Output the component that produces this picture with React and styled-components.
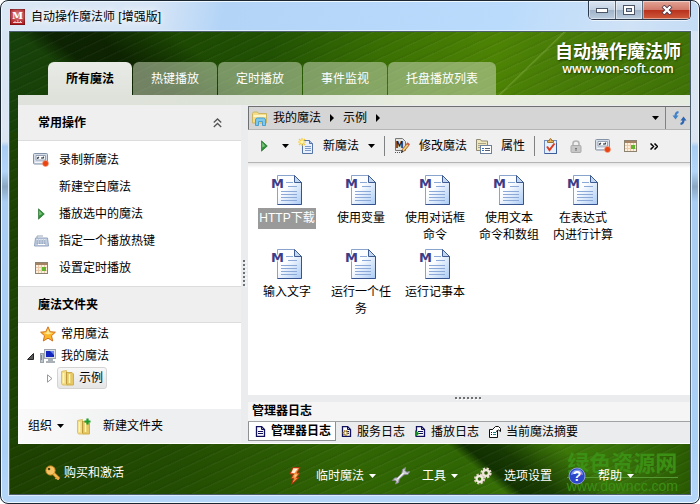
import React, { useState } from 'react';
import styled, { createGlobalStyle, css } from 'styled-components';

const GlobalStyle = createGlobalStyle`
  * {
    box-sizing: border-box;
  }
  body {
    margin: 0;
    background: #ffffff;
    color: #000000;
    font-family: 'Liberation Sans', 'Noto Sans CJK SC', sans-serif;
    font-size: 12px;
    line-height: 18px;
  }
  button {
    margin: 0;
    padding: 0;
    border: 0;
    background: none;
    color: inherit;
    font: inherit;
    white-space: nowrap;
    cursor: pointer;
  }
  svg {
    display: block;
    flex: none;
  }
  ul {
    list-style: none;
    margin: 0;
    padding: 0;
  }
`;

/* ---------- window frame ---------- */

const Window = styled.div`
  display: flex;
  flex-direction: column;
  min-height: 100vh;
  padding: 0 8px 8px;
  border: 1px solid #1b2633;
  border-radius: 8px;
  box-shadow: inset 0 0 0 1px #eef6fe;
  background:
    linear-gradient(100deg, #dbe7f4 0, #d6e5f6 22%, #b3d4f7 32%, #badbfc 72%, #cfe2f6 90%, #c4dcf5 100%)
      0 0 / 100% 30px no-repeat,
    linear-gradient(#d5e3f3 0, #dce6f2 26%, #dbe5f1 28%, #a9cdf2 29%, #b2d5f8 34%, #8aa6c2 37%, #a9cdf3 40%, #abd0f6 90%, #b5d6f8 100%);
`;

const TitleBar = styled.header`
  display: flex;
  align-items: flex-start;
  height: 30px;
`;

const Title = styled.h1`
  display: flex;
  align-items: center;
  gap: 6px;
  height: 31px;
  margin: 0;
  padding-left: 1px;
  font-size: 12px;
  font-weight: 400;
  text-shadow: 0 0 6px #ffffff, 0 0 10px #ffffff;
`;

const Captions = styled.div`
  display: flex;
  margin-left: auto;
  border: 1px solid #2c3a4c;
  border-top: 0;
  border-radius: 0 0 5px 5px;
  overflow: hidden;
  box-shadow: 0 1px 0 #eaf3fc;
`;

const Caption = styled.button`
  display: flex;
  align-items: center;
  justify-content: center;
  width: ${(props) => (props.$close ? '47px' : '27px')};
  height: 18px;
  border-right: ${(props) => (props.$close ? '0' : '1px solid #5b6b7e')};
  box-shadow: inset 0 0 0 1px rgba(255, 255, 255, 0.45);
  background: ${(props) =>
    props.$close
      ? 'linear-gradient(#e3a597 0, #d1796a 48%, #b8301b 50%, #cf5a3b 100%)'
      : 'linear-gradient(#dbe6f2 0, #c3d1e1 48%, #9fb2c8 50%, #bccddf 100%)'};
`;

const Body = styled.div`
  display: flex;
  flex: 1;
  flex-direction: column;
  border: 1px solid #4b5f70;
  box-shadow: 0 0 0 1px #dcecfc;
  background:
    repeating-linear-gradient(155deg, rgba(255, 255, 255, 0.03) 0 1px, transparent 2px 6px, rgba(0, 0, 0, 0.05) 8px 9px),
    linear-gradient(136deg, transparent 384px, rgba(190, 220, 130, 0.25) 385px, transparent 387px) 0 0 / 100% 64px no-repeat,
    linear-gradient(220deg, transparent 0 85px, rgba(9, 34, 0, 0.7) 125px, rgba(9, 34, 0, 0.8) 146px, transparent 156px)
      0 100% / 100% 50px no-repeat,
    linear-gradient(90deg, #1d4001 0, #234d02 25%, #316504 50%, #306604 66%, #3f7a08 78%, #37720a 90%, #2a5a02 100%)
      0 100% / 100% 50px no-repeat,
    linear-gradient(38deg, transparent 0 54px, rgba(8, 22, 0, 0.7) 72px, rgba(8, 22, 0, 0.7) 100px, transparent 150px)
      0 0 / 300px 64px no-repeat,
    linear-gradient(100deg, #16400a 0, #1b4602 20%, #215203 38%, #3a7003 54%, #4d8304 70%, #487c08 80%, #3f7207 100%)
      0 0 / 100% 100px no-repeat,
    #1c4204;
`;

const Banner = styled.div`
  display: flex;
  justify-content: space-between;
  height: 63px;
  padding-left: 38px;
`;

const Tabs = styled.div`
  display: flex;
  align-items: flex-end;
  gap: 1px;
`;

const Tab = styled.button`
  height: 33px;
  padding: 0 18px;
  border-radius: 6px 6px 0 0;
  background: rgba(205, 219, 190, 0.52);
  color: #ffffff;
  ${(props) =>
    props.$active &&
    css`
      background: linear-gradient(#e9ebe6, #dfe3dc);
      color: #000000;
      font-weight: 700;
    `}
`;

const Brand = styled.div`
  padding: 8px 9px 0 0;
  color: #ffffff;
  text-align: center;
  text-shadow: 1px 1px 2px #1d3a00;
  font-size: 18px;
  font-weight: 700;
  line-height: 24px;
`;

const BrandSite = styled.div`
  font-family: 'Open Sans', sans-serif;
  font-size: 12px;
  font-weight: 600;
  line-height: 10px;
`;

const Panel = styled.main`
  display: flex;
  flex: 1;
  flex-direction: column;
  margin-left: 8px;
  border-bottom: 1px solid #ffffff;
  background: #eaecee;
`;

const Strip = styled.div`
  height: 10px;
  background: linear-gradient(90deg, #dfe2dc 0, #dde2d8 30%, #e8ede0 60%, #e6ecdf 100%);
`;

const Columns = styled.div`
  display: flex;
  flex: 1;
`;

/* ---------- sidebar ---------- */

const Sidebar = styled.aside`
  display: flex;
  flex-direction: column;
  width: 223px;
  background: #ffffff;
`;

const SectionTitle = styled.h2`
  display: flex;
  align-items: center;
  justify-content: space-between;
  height: 36px;
  margin: 0;
  padding: 0 19px 0 20px;
  border-bottom: 1px solid #dadcde;
  background: #efefef;
  font-size: 12px;
  font-weight: 700;
`;

const ActionList = styled.ul`
  padding: 5px 0;
  border-bottom: 1px solid #dadcde;
`;

const Action = styled.button`
  display: flex;
  align-items: center;
  gap: 10px;
  width: 100%;
  height: 27px;
  padding-left: 15px;
`;

const IconSlot = styled.span`
  display: flex;
  justify-content: center;
  width: 16px;
`;

const Tree = styled.ul`
  flex: 1;
`;

const TreeRow = styled.li`
  display: flex;
  align-items: center;
  gap: ${(props) => (props.$level ? '4px' : '6px')};
  height: 22px;
  padding-left: ${(props) => (props.$level ? '28px' : '8px')};
`;

const Expander = styled.span`
  display: flex;
  justify-content: center;
  width: ${(props) => (props.$narrow ? '7px' : '8px')};
`;

const TreeItem = styled.button`
  display: flex;
  align-items: center;
  gap: 5px;
  height: 22px;
  ${(props) =>
    props.$selected &&
    css`
      padding: 0 3px;
      border: 1px solid #d4d4d4;
      border-radius: 3px;
      background: linear-gradient(#f8f8f8, #e5e5e5);
    `}
`;

const SideBar = styled.div`
  display: flex;
  align-items: center;
  gap: 13px;
  height: 34px;
  padding-left: 10px;
  background: linear-gradient(90deg, #fafafa 0, #eeeff0 60%);
`;

const TextButton = styled.button`
  display: flex;
  align-items: center;
  gap: ${(props) => props.$gap || '5px'};
`;

const Splitter = styled.div`
  display: flex;
  align-items: flex-end;
  width: 7px;
  padding: 0 0 155px 2px;
`;

/* ---------- main area ---------- */

const Content = styled.section`
  display: flex;
  flex: 1;
  flex-direction: column;
  min-width: 0;
`;

const AddressBar = styled.nav`
  display: flex;
  align-items: center;
  height: 24px;
  margin-top: 1px;
  padding-left: 3px;
  border: 1px solid #6d6f70;
  border-right: 0;
  border-bottom-color: #b5b5b5;
  background: #d5d5d5;
`;

const Crumb = styled.button`
  display: flex;
  align-items: center;
  gap: 9px;
  padding: 0 4px 0 5px;
`;

const AddressTools = styled.div`
  display: flex;
  align-items: center;
  align-self: stretch;
  gap: 6px;
  margin-left: auto;
  padding-right: 3px;
`;

const Divider = styled.span`
  width: 1px;
  height: ${(props) => props.$height || '20px'};
  background: #7f8183;
`;

const Toolbar = styled.div`
  display: flex;
  align-items: center;
  gap: 9px;
  height: 33px;
  padding-left: 13px;
  border-bottom: 1px solid #b3b5b7;
  background: #f0f0f0;
`;

const CommandIcons = styled.div`
  display: flex;
  align-items: center;
  gap: 13px;
`;

const FileArea = styled.ul`
  display: grid;
  flex: 1;
  grid-template-columns: repeat(auto-fill, 74px);
  grid-auto-rows: 74px;
  padding: 11px 0 0 2px;
  background: linear-gradient(#e4e4e4, #ffffff 5px);
`;

const File = styled.button`
  display: flex;
  flex-direction: column;
  align-items: center;
  gap: 2px;
  width: 74px;
`;

const FileName = styled.span`
  max-width: 64px;
  padding: 2px 1px;
  line-height: 17px;
  white-space: pre-line;
  ${(props) =>
    props.$selected &&
    css`
      background: #9a9a9a;
      color: #ffffff;
    `}
`;

const LogSplitter = styled.div`
  display: flex;
  align-items: center;
  justify-content: center;
  height: 7px;
`;

const LogTitle = styled.h2`
  height: 20px;
  margin: 0;
  padding-left: 4px;
  border-bottom: 1px solid #9fa3a3;
  background: #f5f5f5;
  font-size: 12px;
  font-weight: 700;
  line-height: 19px;
`;

const LogTabs = styled.div`
  display: flex;
  height: 21px;
  padding-bottom: 2px;
`;

const LogTab = styled.button`
  display: flex;
  align-items: center;
  gap: 5px;
  padding: 0 5px;
  ${(props) =>
    props.$active &&
    css`
      padding: 0 4px 0 6px;
      border: 1px solid #8d9196;
      border-top: 0;
      background: #ffffff;
      font-weight: 700;
    `}
`;

/* ---------- footer ---------- */

const Footer = styled.footer`
  position: relative;
  z-index: 0;
  display: flex;
  align-items: center;
  height: 50px;
  padding: 14px 56px 0 35px;
  color: #ffffff;
`;

const FooterMenu = styled.nav`
  display: flex;
  gap: 16px;
  margin-left: auto;
`;

const FooterButton = styled.button`
  display: flex;
  align-items: center;
  gap: 5px;
`;

const FooterIcon = styled.span`
  display: flex;
  justify-content: center;
  width: 18px;
  margin-right: 7px;
`;

const Buy = styled(FooterButton)`
  gap: 3px;
  padding-bottom: 6px;
`;

const Watermark = styled.div`
  position: absolute;
  z-index: -1;
  right: 12px;
  bottom: 0;
  color: #3b8f14;
  font-size: 22px;
  font-weight: 700;
  line-height: 26px;
  text-align: center;
  pointer-events: none;
`;

const WatermarkSite = styled.div`
  border-top: 1px solid #559a33;
  font-size: 14px;
  font-weight: 400;
  line-height: 16px;
`;

/* ---------- icons ---------- */

const AppIcon = () => (
  <svg width="15" height="16" viewBox="0 0 15 16">
    <rect x="0.500" y="0.500" width="14" height="15" fill="#b11116" stroke="#7d0a0d" />
    <text x="7.500" y="9.500" textAnchor="middle" fill="#fff" fontFamily="DejaVu Serif" fontWeight="700" fontSize="10">
      M
    </text>
    <path d="M3 13.500h9" stroke="#f3c8c8" />
    <path d="M4.500 12.500h1M7 12h1.500M10 12.500h1" stroke="#f3c8c8" />
  </svg>
);

const Caret = ({ color = '#000' }) => (
  <svg width="7" height="4" viewBox="0 0 7 4">
    <path d="M0 0h7L3.500 4z" fill={color} />
  </svg>
);

const CrumbArrow = () => (
  <svg width="4" height="8" viewBox="0 0 4 8">
    <path d="M0 0l4 4-4 4z" fill="#000" />
  </svg>
);

const PlayIcon = () => (
  <svg width="7" height="12" viewBox="0 0 7 12">
    <path d="M0.500 0.800L6.300 6 0.500 11.200z" fill="#2f9138" stroke="#1b6122" strokeWidth="0.600" />
    <path d="M1.200 2.500v5l3-1.500z" fill="#7cc47e" />
  </svg>
);

const CassetteIcon = () => (
  <svg width="16" height="14" viewBox="0 0 16 14">
    <rect x="0.500" y="0.500" width="14" height="10.500" rx="1" fill="#d5dde8" stroke="#8492a8" />
    <path d="M3 2.500h9.500v4.500h-9.500z" fill="#fff" stroke="#97a3b3" />
    <path d="M4 5.500l2-1.500M5 4v2M9 4v2M10.500 3.500v2" stroke="#39434f" strokeWidth="1.200" />
    <path d="M2 9.500h8" stroke="#f5f8fb" />
    <circle cx="12.500" cy="10.500" r="3" fill="#ea4413" stroke="#f7a283" strokeWidth="0.600" />
  </svg>
);

const KeyboardIcon = () => (
  <svg width="15" height="12" viewBox="0 0 15 12">
    <path d="M3 3V1h6" fill="none" stroke="#9aa6b5" />
    <path d="M1.500 3h12l1 8H0.500z" fill="#c1cee2" stroke="#93a4bd" />
    <path d="M2.500 5h10M2.500 7h10" stroke="#fff" strokeDasharray="1.500 1" />
    <path d="M2.500 6h10M2.500 8h10" stroke="#7386a3" strokeDasharray="1.500 1" />
    <path d="M4 9.500h7" stroke="#fff" />
  </svg>
);

const CalendarIcon = () => (
  <svg width="13" height="12" viewBox="0 0 13 12">
    <rect x="0.500" y="0.500" width="12" height="11" fill="#fcefdc" stroke="#8b8270" />
    <rect x="1" y="1" width="11" height="2" fill="#a58261" />
    <path d="M1 5.500h11M1 8.500h11M3.500 3v8M6.500 3v8M9.500 3v8" stroke="#ecc9ab" />
    <rect x="7" y="5" width="4" height="4" fill="#62b32e" />
  </svg>
);

const StarIcon = () => (
  <svg width="16" height="16" viewBox="0 0 16 16">
    <path
      d="M8 0.800l2.200 4.900 5.200 0.500-3.900 3.500 1.200 5.300L8 12.200 3.300 15l1.200-5.300L0.600 6.200l5.200-0.500z"
      fill="#fbb62a"
      stroke="#d4711d"
    />
    <path d="M8 3l1.500 3.500 3.500 0.500-5 1.500-4.500-1.500 3-0.500z" fill="#ffe991" />
  </svg>
);

const ComputerIcon = () => (
  <svg width="16" height="15" viewBox="0 0 16 15">
    <rect x="0.500" y="4.500" width="3" height="9" fill="#bdc4ca" stroke="#9aa2a9" />
    <rect x="1" y="6" width="1" height="5" fill="#4eb04e" />
    <rect x="4.500" y="0.500" width="11" height="9" fill="#dbe0e6" stroke="#a2a8b0" />
    <rect x="6" y="2" width="8" height="6" fill="#1226bd" />
    <path d="M10 2h4v4z" fill="#6d86ee" />
    <path d="M8 10h5v2h2v2H6v-2h2z" fill="#a9b0b8" />
  </svg>
);

const FolderShape = () => (
  <>
    <path d="M0.500 1.500L5.500 0.500v13l1 1.500H1.500l-1-1.500z" fill="#f3dc85" stroke="#dcc06a" />
    <path d="M5.500 2.500h5.500l1.500 1.500v11H6l-0.500-1.500z" fill="#e6c862" stroke="#cfae4f" />
    <path d="M2.500 3v10M8.500 4v9" stroke="#fff5c4" strokeWidth="1.500" />
    <path d="M5.500 2v12" stroke="#bd9a3d" />
  </>
);

const FolderIcon = () => (
  <svg width="13" height="16" viewBox="0 0 13 16">
    <FolderShape />
  </svg>
);

const NewFolderIcon = () => (
  <svg width="14" height="17" viewBox="0 0 14 17">
    <g transform="translate(0 1)">
      <FolderShape />
    </g>
    <path d="M10.500 0.500v6M7.500 3.500h6" stroke="#1d9b2c" strokeWidth="2.200" />
  </svg>
);

const ExplorerIcon = () => (
  <svg width="16" height="15" viewBox="0 0 16 15">
    <path d="M0.500 12V2.500l1-1.500h4l1 1.500h8V12z" fill="#f4dd86" stroke="#cdb461" />
    <path d="M1.500 5h12.500" stroke="#fdf5c5" strokeWidth="2" />
    <path d="M3.500 14.500V9q0-2 2-2h6q2 0 2 2v5.500h-3V10.500h-4v4z" fill="#7cc8ee" stroke="#4a9fcc" />
  </svg>
);

const RefreshIcon = () => (
  <svg width="15" height="14" viewBox="0 0 15 14">
    <path d="M6.500 1Q3.500 1.500 3.500 5" fill="none" stroke="#3f83cc" strokeWidth="2" />
    <path d="M0.500 4.500h6L3.500 8.500z" fill="#3f83cc" />
    <path d="M8.500 13Q11.500 12.500 11.500 9" fill="none" stroke="#2c65b0" strokeWidth="2" />
    <path d="M8.500 9.500h6L11.500 5.500z" fill="#2c65b0" />
  </svg>
);

const NewMagicIcon = () => (
  <svg width="16" height="16" viewBox="0 0 16 16">
    <path d="M4.500 2.500h7l3 3v10h-10z" fill="#e8f0fb" stroke="#5573a4" />
    <path d="M11.500 2.500v3h3" fill="#a9c2e3" stroke="#5573a4" />
    <path d="M7 8.500h6M7 10.500h6M7 12.500h6" stroke="#7e9ac6" />
    <path d="M4 0v8M0 4h8M1 1l6 6M7 1L1 7" stroke="#f3cb3a" strokeWidth="1.200" />
    <circle cx="4" cy="4" r="1.800" fill="#fff6b0" />
  </svg>
);

const EditIcon = () => (
  <svg width="16" height="16" viewBox="0 0 16 16">
    <path d="M1.500 0.500h7l3 3v9h-10z" fill="#e3e3e1" stroke="#777" />
    <text x="1.500" y="9.500" fill="#222" fontFamily="DejaVu Sans" fontWeight="700" fontSize="8">
      M
    </text>
    <path d="M1 14.500h7" stroke="#555" strokeDasharray="1 1" />
    <path d="M14 6.500L9 12.500" stroke="#a96321" strokeWidth="3.400" />
    <path d="M14 6.500L9 12.500" stroke="#f3d183" strokeWidth="1.800" />
    <path d="M14.800 5.300l-1.200 1.500" stroke="#cf5a4a" strokeWidth="3.200" />
    <path d="M7 15l0.500-3 2.500 1.800z" fill="#333" />
  </svg>
);

const PropertiesIcon = () => (
  <svg width="16" height="15" viewBox="0 0 16 15">
    <path d="M0.500 11.500v-11h4l1 1.500h6v9.500z" fill="#efe6bd" stroke="#8f8b73" />
    <path d="M2 4.500h8M2 6.500h2M2 8.500h2" stroke="#a9a486" />
    <rect x="4.500" y="6.500" width="11" height="8" fill="#fff" stroke="#6c7f9b" />
    <path d="M6 9.500h2M6 11.500h2" stroke="#3a6fc4" />
    <path d="M9 9.500h5M9 11.500h5" stroke="#555f70" />
  </svg>
);

const ClipboardIcon = () => (
  <svg width="13" height="16" viewBox="0 0 13 16">
    <rect x="0.500" y="2.500" width="12" height="13" fill="#e6effc" stroke="#6f8bc0" />
    <path d="M1 15.500h11.500V5" fill="none" stroke="#3d5c9c" />
    <path d="M3.500 4.500v-2h2q0-2 1-2t1 2h2v2z" fill="#e7b25b" stroke="#9b7434" />
    <path d="M3 8.500l2.500 3.500L10.500 5.500" fill="none" stroke="#db3c22" strokeWidth="2" />
  </svg>
);

const LockIcon = () => (
  <svg width="12" height="13" viewBox="0 0 12 13">
    <path d="M3 6V3.500Q3 1 6 1t3 2.500V6" fill="none" stroke="#b5b5b5" strokeWidth="1.600" />
    <rect x="1" y="5.500" width="10" height="7" rx="1" fill="#c6c6c6" stroke="#aaa" />
    <path d="M6 8v3M5 8.500h2" stroke="#777" />
  </svg>
);

const MoreIcon = () => (
  <svg width="8" height="7" viewBox="0 0 8 7">
    <path d="M0.500 0.500l3 3-3 3M4.500 0.500l3 3-3 3" fill="none" stroke="#000" strokeWidth="1.500" />
  </svg>
);

const CollapseIcon = () => (
  <svg width="9" height="10" viewBox="0 0 9 10">
    <path d="M0.800 4.500l3.700-3.500 3.700 3.500M0.800 9l3.700-3.500L8.200 9" fill="none" stroke="#555" strokeWidth="1.300" />
  </svg>
);

const MagicFileIcon = () => (
  <svg width="32" height="32" viewBox="0 0 32 32">
    <defs>
      <linearGradient id="sheet" x1="0" y1="0" x2="1" y2="1">
        <stop offset="0.400" stopColor="#fbfdff" />
        <stop offset="1" stopColor="#a9caf5" />
      </linearGradient>
    </defs>
    <path d="M6.500 1.500h17l7 7v22h-24z" fill="url(#sheet)" stroke="#8aa3cc" />
    <path d="M30.500 8v22.500h-24" fill="none" stroke="#35548f" />
    <path d="M23.500 1.500v7h7z" fill="#c3d6f0" stroke="#3f5d92" />
    <path d="M15 8.500h7M17 12.500h9M10 17.500h16M10 20.500h16M10 23.500h16M10 26.500h16" stroke="#8ba8d6" />
    <text
      x="0"
      y="14"
      fill="#3d3d86"
      stroke="#ffffff"
      strokeWidth="2"
      paintOrder="stroke"
      fontFamily="DejaVu Sans"
      fontWeight="700"
      fontSize="13"
    >
      M
    </text>
  </svg>
);

const LogIcon = ({ kind }) => (
  <svg width="11" height="11" viewBox="0 0 11 11">
    <path d="M1.500 0.500h5l3 3v7h-8z" fill="#fff" stroke="#10105c" strokeWidth="1.300" />
    <path d="M6.500 0.500v3h3" fill="none" stroke="#10105c" />
    <path d="M3 5.500h5M3 7.500h5" stroke="#10105c" />
    {kind === 'service' && (
      <circle cx="4.500" cy="7" r="2" fill="#fff" stroke="#9a7417" strokeWidth="2" strokeDasharray="1.200 0.600" />
    )}
    {kind === 'play' && <path d="M0 4l4.500 3.500L0 11z" fill="#138a26" />}
  </svg>
);

const SummaryIcon = () => (
  <svg width="12" height="12" viewBox="0 0 12 12">
    <path d="M0.500 3.500h8v8h-8z" fill="#fff" stroke="#111" />
    <path d="M2 6.500h1M2 8.500h1" stroke="#111" />
    <path d="M4 6.500h3M4 8.500h3" stroke="#168080" />
    <path d="M3.500 3.500l3-3h3l2 2v3l-2-1.500L7 5.500" fill="#fff" stroke="#111" />
  </svg>
);

const KeyIcon = () => (
  <svg width="16" height="16" viewBox="0 0 16 16">
    <path d="M7 7l7 7" stroke="#c27a1b" strokeWidth="3.600" />
    <path d="M7 7l7 7" stroke="#f5bf55" strokeWidth="2" />
    <path d="M12.500 12l-2 2M14 14h-2" stroke="#e8a63c" strokeWidth="1.600" />
    <circle cx="5.500" cy="5.500" r="4.600" fill="#f6c364" stroke="#d38b25" />
    <circle cx="4" cy="4" r="1.300" fill="#4d4a10" />
  </svg>
);

const BoltIcon = () => (
  <svg width="12" height="18" viewBox="0 0 12 18">
    <path d="M4 0.500h7L8 6h3L7.500 10.500H10L2.500 17.500l2-6H2L4.500 7H0.800z" fill="#f58a3a" stroke="#ab3412" />
    <path d="M4.500 1.500h4.500L5.500 6H2.500z" fill="#fff3dc" />
    <path d="M5.500 7.500h3L5.500 11z" fill="#ffd58b" />
  </svg>
);

const WrenchIcon = () => (
  <svg width="18" height="18" viewBox="0 0 18 18">
    <path
      d="M13.500 0.500l-3 2-0.700 4-4.300 4.300-3 0.200-2 2.500 2.500-0.300 1.300 1.300-0.700 2.500 3-1.500 0.700-3.500 4.700-4.300 4-0.200 1.700-3-3 0.700-1.700-1.700z"
      fill="#cfd0d6"
      stroke="#85868f"
    />
    <path d="M5.500 12l6-6" stroke="#f6f6fa" strokeWidth="1.300" />
  </svg>
);

const GearsIcon = () => (
  <svg width="18" height="18" viewBox="0 0 18 18">
    <circle cx="12" cy="6" r="4.400" fill="none" stroke="#e9ded0" strokeWidth="2.400" strokeDasharray="2.200 1.250" />
    <circle cx="12" cy="6" r="2.900" fill="none" stroke="#efe6da" strokeWidth="2.200" />
    <circle cx="5.500" cy="12" r="4.400" fill="none" stroke="#d9cbba" strokeWidth="2.400" strokeDasharray="2.200 1.250" />
    <circle cx="5.500" cy="12" r="2.900" fill="none" stroke="#f3ece2" strokeWidth="2.200" />
  </svg>
);

const HelpIcon = () => (
  <svg width="18" height="18" viewBox="0 0 18 18">
    <circle cx="9" cy="9" r="8" fill="#2b47c9" stroke="#8d9bd6" />
    <path d="M3 8Q3.500 3 9 2.500T15 8Q9 5.500 3 8z" fill="#7f97ec" />
    <text x="9" y="14" textAnchor="middle" fill="#fff" fontFamily="Liberation Sans" fontWeight="700" fontSize="14">
      ?
    </text>
  </svg>
);

const GripVertical = () => (
  <svg width="4" height="28" viewBox="0 0 4 28">
    <path d="M1 0v28" stroke="#6f7274" strokeWidth="2" strokeDasharray="2 2" />
    <path d="M3 1v27" stroke="#fff" strokeDasharray="2 2" />
  </svg>
);

const GripHorizontal = () => (
  <svg width="28" height="3" viewBox="0 0 28 3">
    <path d="M0 1h28" stroke="#6f7274" strokeWidth="2" strokeDasharray="2 2" />
    <path d="M1 2.500h27" stroke="#fff" strokeDasharray="2 2" />
  </svg>
);

/* ---------- data ---------- */

const tabs = ['所有魔法', '热键播放', '定时播放', '事件监视', '托盘播放列表'];

const actions = [
  { name: '录制新魔法', icon: <CassetteIcon /> },
  { name: '新建空白魔法', icon: null },
  { name: '播放选中的魔法', icon: <PlayIcon /> },
  { name: '指定一个播放热键', icon: <KeyboardIcon /> },
  { name: '设置定时播放', icon: <CalendarIcon /> },
];

const files = [
  'HTTP下载',
  '使用变量',
  '使用对话框命令',
  '使用文本\n命令和数组',
  '在表达式\n内进行计算',
  '输入文字',
  '运行一个任务',
  '运行记事本',
];

const logs = [
  { name: '管理器日志', icon: <LogIcon /> },
  { name: '服务日志', icon: <LogIcon kind="service" /> },
  { name: '播放日志', icon: <LogIcon kind="play" /> },
  { name: '当前魔法摘要', icon: <SummaryIcon /> },
];

const menus = [
  { name: '临时魔法', icon: <BoltIcon />, caret: true },
  { name: '工具', icon: <WrenchIcon />, caret: true },
  { name: '选项设置', icon: <GearsIcon />, caret: false },
  { name: '帮助', icon: <HelpIcon />, caret: true },
];

function App() {
  const [tab, setTab] = useState(0);
  const [file, setFile] = useState(0);
  const [log, setLog] = useState(0);

  return (
    <>
      <GlobalStyle />
      <Window>
        <TitleBar>
          <Title>
            <AppIcon />
            自动操作魔法师 [增强版]
          </Title>
          <Captions>
            <Caption aria-label="最小化">
              <svg width="12" height="5" viewBox="0 0 12 5">
                <rect x="0.500" y="0.500" width="11" height="4" fill="#fff" stroke="#4c5566" />
              </svg>
            </Caption>
            <Caption aria-label="最大化">
              <svg width="12" height="10" viewBox="0 0 12 10">
                <rect x="0.500" y="0.500" width="11" height="9" fill="#fff" stroke="#4c5566" />
                <rect x="3.500" y="3.500" width="5" height="3" fill="#b4c4d6" stroke="#4c5566" />
              </svg>
            </Caption>
            <Caption $close aria-label="关闭">
              <svg width="12" height="10" viewBox="0 0 12 10">
                <path d="M2 1l8 8M10 1L2 9" stroke="#50394a" strokeWidth="4" />
                <path d="M2.500 1.500l7 7M9.500 1.500l-7 7" stroke="#fff" strokeWidth="2.400" />
              </svg>
            </Caption>
          </Captions>
        </TitleBar>

        <Body>
          <Banner>
            <Tabs role="tablist">
              {tabs.map((name, i) => (
                <Tab key={name} role="tab" aria-selected={tab === i} $active={tab === i} onClick={() => setTab(i)}>
                  {name}
                </Tab>
              ))}
            </Tabs>
            <Brand>
              自动操作魔法师
              <BrandSite>www.won-soft.com</BrandSite>
            </Brand>
          </Banner>

          <Panel>
            <Strip />
            <Columns>
              <Sidebar>
                <SectionTitle>
                  常用操作
                  <button aria-label="折叠">
                    <CollapseIcon />
                  </button>
                </SectionTitle>
                <ActionList>
                  {actions.map((action) => (
                    <li key={action.name}>
                      <Action>
                        <IconSlot>{action.icon}</IconSlot>
                        {action.name}
                      </Action>
                    </li>
                  ))}
                </ActionList>
                <SectionTitle>魔法文件夹</SectionTitle>
                <Tree>
                  <TreeRow>
                    <Expander />
                    <TreeItem>
                      <StarIcon />
                      常用魔法
                    </TreeItem>
                  </TreeRow>
                  <TreeRow>
                    <Expander>
                      <svg width="7" height="7" viewBox="0 0 7 7">
                        <path d="M6.500 0.500v6h-6z" fill="#595959" stroke="#262626" />
                      </svg>
                    </Expander>
                    <TreeItem>
                      <ComputerIcon />
                      我的魔法
                    </TreeItem>
                  </TreeRow>
                  <TreeRow $level>
                    <Expander $narrow>
                      <svg width="6" height="9" viewBox="0 0 6 9">
                        <path d="M0.500 0.800l4.500 3.700-4.500 3.700z" fill="#fff" stroke="#999" />
                      </svg>
                    </Expander>
                    <TreeItem $selected>
                      <FolderIcon />
                      示例
                    </TreeItem>
                  </TreeRow>
                </Tree>
                <SideBar>
                  <TextButton>
                    组织
                    <Caret />
                  </TextButton>
                  <TextButton $gap="12px">
                    <NewFolderIcon />
                    新建文件夹
                  </TextButton>
                </SideBar>
              </Sidebar>

              <Splitter>
                <GripVertical />
              </Splitter>

              <Content>
                <AddressBar>
                  <ExplorerIcon />
                  <Crumb>
                    我的魔法
                    <CrumbArrow />
                  </Crumb>
                  <Crumb>
                    示例
                    <CrumbArrow />
                  </Crumb>
                  <AddressTools>
                    <button aria-label="历史">
                      <Caret />
                    </button>
                    <Divider $height="22px" />
                    <button aria-label="刷新">
                      <RefreshIcon />
                    </button>
                  </AddressTools>
                </AddressBar>

                <Toolbar role="toolbar">
                  <TextButton $gap="14px" aria-label="播放">
                    <PlayIcon />
                    <Caret />
                  </TextButton>
                  <TextButton $gap="9px">
                    <NewMagicIcon />
                    新魔法
                    <Caret />
                  </TextButton>
                  <Divider />
                  <TextButton $gap="9px">
                    <EditIcon />
                    修改魔法
                  </TextButton>
                  <TextButton $gap="9px">
                    <PropertiesIcon />
                    属性
                  </TextButton>
                  <Divider />
                  <CommandIcons>
                    <button aria-label="检查">
                      <ClipboardIcon />
                    </button>
                    <button aria-label="锁定">
                      <LockIcon />
                    </button>
                    <button aria-label="录制">
                      <CassetteIcon />
                    </button>
                    <button aria-label="定时">
                      <CalendarIcon />
                    </button>
                    <button aria-label="更多">
                      <MoreIcon />
                    </button>
                  </CommandIcons>
                </Toolbar>

                <FileArea>
                  {files.map((name, i) => (
                    <li key={name}>
                      <File onClick={() => setFile(i)}>
                        <MagicFileIcon />
                        <FileName $selected={file === i}>{name}</FileName>
                      </File>
                    </li>
                  ))}
                </FileArea>

                <LogSplitter>
                  <GripHorizontal />
                </LogSplitter>
                <LogTitle>{logs[log].name}</LogTitle>
                <LogTabs role="tablist">
                  {logs.map((item, i) => (
                    <LogTab
                      key={item.name}
                      role="tab"
                      aria-selected={log === i}
                      $active={log === i}
                      onClick={() => setLog(i)}
                    >
                      {item.icon}
                      {item.name}
                    </LogTab>
                  ))}
                </LogTabs>
              </Content>
            </Columns>
          </Panel>

          <Footer>
            <Buy>
              <KeyIcon />
              购买和激活
            </Buy>
            <FooterMenu>
              {menus.map((menu) => (
                <FooterButton key={menu.name}>
                  <FooterIcon>{menu.icon}</FooterIcon>
                  {menu.name}
                  {menu.caret && <Caret color="#fff" />}
                </FooterButton>
              ))}
            </FooterMenu>
            <Watermark>
              绿色资源网
              <WatermarkSite>www.downcc.com</WatermarkSite>
            </Watermark>
          </Footer>
        </Body>
      </Window>
    </>
  );
}

export default App;
